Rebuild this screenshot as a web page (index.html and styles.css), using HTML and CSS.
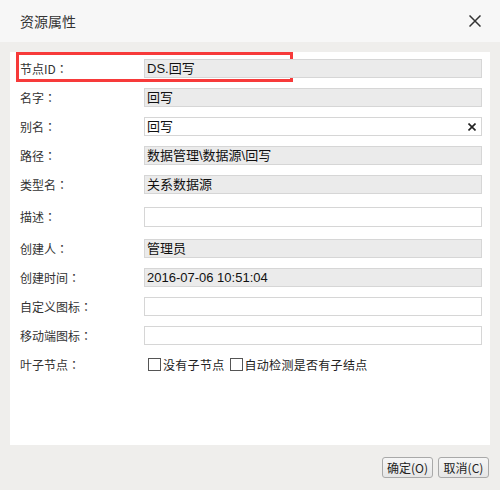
FILE: index.html
```html
<!DOCTYPE html>
<html>
<head>
<meta charset="utf-8">
<link rel="stylesheet" href="styles.css">
</head>
<body>
<div class="dialog">
  <div class="header">
    <span class="title">资源属性</span>
    <svg class="close" width="12" height="12" viewBox="0 0 12 12"><path d="M0.5 0.5L11.5 11.5M11.5 0.5L0.5 11.5" stroke="#333" stroke-width="1.5" fill="none"/></svg>
  </div>
  <div class="main">
    <div class="panel">
      <div class="highlight"></div>
      <div class="row"><span class="label">节点ID<span class="colon">：</span></span><div class="field ro">DS.回写</div></div>
      <div class="row"><span class="label">名字<span class="colon">：</span></span><div class="field ro">回写</div></div>
      <div class="row"><span class="label">别名<span class="colon">：</span></span><div class="field">回写<svg class="clear" width="8" height="8" viewBox="0 0 8 8"><path d="M0.5 0.5L7.5 7.5M7.5 0.5L0.5 7.5" stroke="#222" stroke-width="1.6" fill="none"/></svg></div></div>
      <div class="row"><span class="label">路径<span class="colon">：</span></span><div class="field ro">数据管理\数据源\回写</div></div>
      <div class="row"><span class="label">类型名<span class="colon">：</span></span><div class="field ro">关系数据源</div></div>
      <div class="row desc"><span class="label">描述<span class="colon">：</span></span><div class="field"></div></div>
      <div class="row"><span class="label">创建人<span class="colon">：</span></span><div class="field ro">管理员</div></div>
      <div class="row"><span class="label">创建时间<span class="colon">：</span></span><div class="field ro">2016-07-06 10:51:04</div></div>
      <div class="row"><span class="label">自定义图标<span class="colon">：</span></span><div class="field"></div></div>
      <div class="row"><span class="label">移动端图标<span class="colon">：</span></span><div class="field"></div></div>
      <div class="row"><span class="label">叶子节点<span class="colon">：</span></span>
        <div class="checks">
          <span class="box"></span><span class="ctext">没有子节点</span>
          <span class="box"></span><span class="ctext">自动检测是否有子结点</span>
        </div>
      </div>
    </div>
    <div class="buttons">
      <button class="btn">确定(O)</button>
      <button class="btn">取消(C)</button>
    </div>
  </div>
</div>
</body>
</html>
```
FILE: styles.css
```css
* { box-sizing: border-box; }
html, body { margin: 0; padding: 0; }
body {
  width: 500px;
  height: 490px;
  overflow: hidden;
  font-family: "Noto Sans CJK SC", "Liberation Sans", sans-serif;
  color: #333;
}
.dialog { width: 500px; height: 490px; display: flex; flex-direction: column; }
.header {
  height: 42px;
  background: #f7f7f7;
  display: flex;
  align-items: center;
  justify-content: space-between;
  padding: 0 19px 0 20px;
}
.title { font-size: 14px; color: #333; line-height: 1; }
.close { display: block; }
.main {
  flex: 1;
  background: #efeeec;
  padding: 10px 10px 0 10px;
}
.panel {
  position: relative;
  background: #fff;
  height: 393px;
  padding: 7px 8px 0 10px;
  display: flex;
  flex-direction: column;
  gap: 10px;
}
.highlight {
  position: absolute;
  left: 6px;
  top: 0;
  width: 277px;
  height: 30px;
  border: 3px solid #f73a3a;
}
.row {
  display: flex;
  align-items: center;
  height: 19px;
}
.row.desc { margin: 3px 0 2px; height: 20px; }
.label {
  width: 124px;
  font-size: 12px;
  color: #333;
  line-height: 1;
}
.colon { font-family: "Noto Sans CJK JP", sans-serif; }
.field {
  position: relative;
  width: 338px;
  height: 100%;
  border: 1px solid #d6d6d6;
  background: #fff;
  font-family: "Liberation Sans", "Noto Sans CJK SC", sans-serif;
  font-size: 13px;
  line-height: 17px;
  color: #111;
  padding-left: 2px;
  white-space: nowrap;
}
.field.ro { background: #ebebeb; }
.clear { position: absolute; right: 5px; top: 5px; }
.checks { display: flex; align-items: center; font-size: 12px; color: #222; line-height: 1; }
.box {
  width: 13px;
  height: 13px;
  border: 1px solid #555;
  background: #fff;
  margin: 0 2px 0 4px;
}
.box:first-child { margin-left: 4px; }
.ctext { margin-right: 1px; letter-spacing: 0.3px; }
.buttons {
  display: flex;
  justify-content: flex-end;
  gap: 5px;
  padding-top: 12px;
  padding-right: 1px;
}
.btn {
  width: 51px;
  height: 21px;
  padding: 0;
  border: 1px solid #a9a9a9;
  border-radius: 3px;
  background: linear-gradient(#f6f6f6, #e6e6e6);
  font-family: "Noto Sans CJK SC", "Liberation Sans", sans-serif;
  font-size: 12px;
  color: #222;
  line-height: 1;
}
```
